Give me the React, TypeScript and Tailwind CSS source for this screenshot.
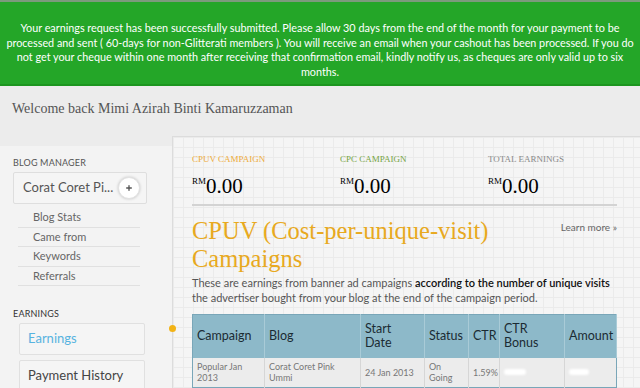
import { Plus } from "lucide-react";

const sans = "font-['Lato','Open_Sans',sans-serif]";
const serif = "font-['Liberation_Serif','DejaVu_Serif',serif]";

const blogLinks = ["Blog Stats", "Came from", "Keywords", "Referrals"];

function Sidebar() {
  return (
    <aside className={`mt-[10px] w-[172px] shrink-0 bg-[#f3f3f3] pl-[13px] pt-[11px] ${sans}`}>
      <p className="text-[9px] uppercase leading-[12px] tracking-[0.02em] text-[#555]">Blog Manager</p>
      <div className="mt-[3px] flex h-[32px] w-[134px] items-center justify-between rounded-[2px] border border-[#dedede] bg-[#f5f5f5] pl-[9px] pr-[6px]">
        <span className="text-[13px] text-[#555]">Corat Coret Pi...</span>
        <span className="flex h-[22px] w-[22px] items-center justify-center rounded-full border border-[#e2e2e2] bg-white shadow-[0_0_3px_rgba(0,0,0,0.2)]">
          <Plus className="h-[8px] w-[8px] text-[#555]" strokeWidth={4} />
        </span>
      </div>
      <ul className="ml-[5px] mt-[4px] w-[122px]">
        {blogLinks.map((link) => (
          <li key={link} className="flex h-[19.5px] items-center border-b border-[#e0e0e0] pl-[15px] text-[11px] text-[#666]">
            {link}
          </li>
        ))}
      </ul>
      <p className="mt-[22px] text-[9px] uppercase leading-[12px] tracking-[0.02em] text-[#333]">Earnings</p>
      <div className="ml-[6px] mt-[3px] flex h-[32px] w-[126px] items-center rounded-[2px] border border-[#e0e0e0] bg-[#f5f5f5] pl-[8px] text-[13px] text-[#57b3e0]">
        Earnings
      </div>
      <div className="ml-[6px] mt-[5px] flex h-[32px] w-[126px] items-center rounded-[2px] border border-[#e0e0e0] bg-[#f5f5f5] pl-[8px] text-[13px] text-[#444]">
        Payment History
      </div>
    </aside>
  );
}

function Stat({ label, color }: { label: string; color: string }) {
  return (
    <div className="w-[148px]">
      <p className={`text-[9px] uppercase leading-[12px] ${color} ${serif}`}>{label}</p>
      <p className={`mt-[9px] flex items-start text-black ${serif}`}>
        <span className="mt-[1px] text-[9px] leading-[12px]">RM</span>
        <span className="text-[21px] leading-[24px]">0.00</span>
      </p>
    </div>
  );
}

const headers = ["Campaign", "Blog", "Start Date", "Status", "CTR", "CTR Bonus", "Amount"];
const widths = ["w-[72px]", "w-[96px]", "w-[64px]", "w-[44px]", "w-[31px]", "w-[65px]", "w-[52px]"];

function CampaignTable() {
  return (
    <table className={`mt-[9px] w-[425px] table-fixed border-collapse border border-[#79a6b8] ${sans}`}>
      <thead>
        <tr className="h-[43px] bg-[#8db9c9]">
          {headers.map((h, i) => (
            <th
              key={h}
              className={`${widths[i]} border-r border-[#a9cbd7] px-[4px] text-left align-middle text-[12.5px] font-normal leading-[14px] text-[#1b2b33]`}
            >
              {h === "Start Date" ? (
                <>
                  Start
                  <br />
                  Date
                </>
              ) : h === "CTR Bonus" ? (
                <>
                  CTR
                  <br />
                  Bonus
                </>
              ) : (
                h
              )}
            </th>
          ))}
        </tr>
      </thead>
      <tbody>
        <tr className="h-[30px] bg-[#ececec] text-[9px] leading-[11px] text-[#777]">
          <td className="border-r border-[#d6d6d6] px-[4px]">
            Popular Jan
            <br />
            2013
          </td>
          <td className="border-r border-[#d6d6d6] px-[4px]">
            Corat Coret Pink
            <br />
            Ummi
          </td>
          <td className="border-r border-[#d6d6d6] px-[4px]">24 Jan 2013</td>
          <td className="border-r border-[#d6d6d6] px-[4px]">
            On
            <br />
            Going
          </td>
          <td className="border-r border-[#d6d6d6] px-[4px]">1.59%</td>
          <td className="border-r border-[#d6d6d6] px-[4px]">
            <span className="block h-[6px] w-[22px] rounded-[3px] bg-white blur-[1px]" />
          </td>
          <td className="px-[4px]">
            <span className="block h-[6px] w-[20px] rounded-[3px] bg-white blur-[1px]" />
          </td>
        </tr>
      </tbody>
    </table>
  );
}

function MainPanel() {
  return (
    <main className="relative mr-[2px] flex-1 rounded-tr-[3px] border-l border-t border-r border-[#dcdcdc] bg-[#f5f5f5] bg-[linear-gradient(to_right,#ebebeb_1px,transparent_1px),linear-gradient(to_bottom,#ebebeb_1px,transparent_1px)] bg-[size:10px_10px] px-[19px] pt-[16px]">
      <span className="absolute left-[-4px] top-[188px] h-[7px] w-[7px] rounded-full bg-[#f2b316]" />
      <div className="flex">
        <Stat label="CPUV Campaign" color="text-[#eeab3a]" />
        <Stat label="CPC Campaign" color="text-[#76a444]" />
        <Stat label="Total Earnings" color="text-[#8a8a8a]" />
      </div>
      <div className="mt-[6px] h-[2px] w-[425px] bg-[#d3d3d3]" />
      <div className="mt-[11px] flex w-[425px] items-start justify-between">
        <h2 className={`text-[24.5px] leading-[28px] text-[#e8a920] ${serif}`}>
          CPUV (Cost-per-unique-visit)
          <br />
          Campaigns
        </h2>
        <span className={`mt-[3px] text-[10px] text-[#666] ${sans}`}>Learn more »</span>
      </div>
      <p className={`mt-[2px] w-[430px] text-[11px] leading-[15px] text-[#555] ${sans}`}>
        These are earnings from banner ad campaigns{" "}
        <span className="font-semibold text-[#111]">according to the number of unique visits</span> the advertiser
        bought from your blog at the end of the campaign period.
      </p>
      <CampaignTable />
    </main>
  );
}

export default function App() {
  return (
    <div className="h-[388px] w-[640px] overflow-hidden bg-[#ececec]">
      <div
        className={`h-[86px] border-t-2 border-b-2 border-t-[#7c9a7c] border-b-[#1d961f] bg-[#24a628] pt-[19px] text-center text-[10.8px] leading-[14.5px] text-white ${sans}`}
      >
        <p>
          Your earnings request has been successfully submitted. Please allow 30 days from the end of the month for your
          payment to be
          <br />
          processed and sent ( 60-days for non-Glitterati members ). You will receive an email when your cashout has been
          processed. If you do
          <br />
          not get your cheque within one month after receiving that confirmation email, kindly notify us, as cheques are only
          valid up to six
          <br />
          months.
        </p>
      </div>
      <h1 className={`h-[50px] pl-[12px] pt-[12px] text-[14px] text-[#555] ${serif}`}>Welcome back Mimi Azirah Binti Kamaruzzaman</h1>
      <div className="flex h-[252px]">
        <Sidebar />
        <MainPanel />
      </div>
    </div>
  );
}
